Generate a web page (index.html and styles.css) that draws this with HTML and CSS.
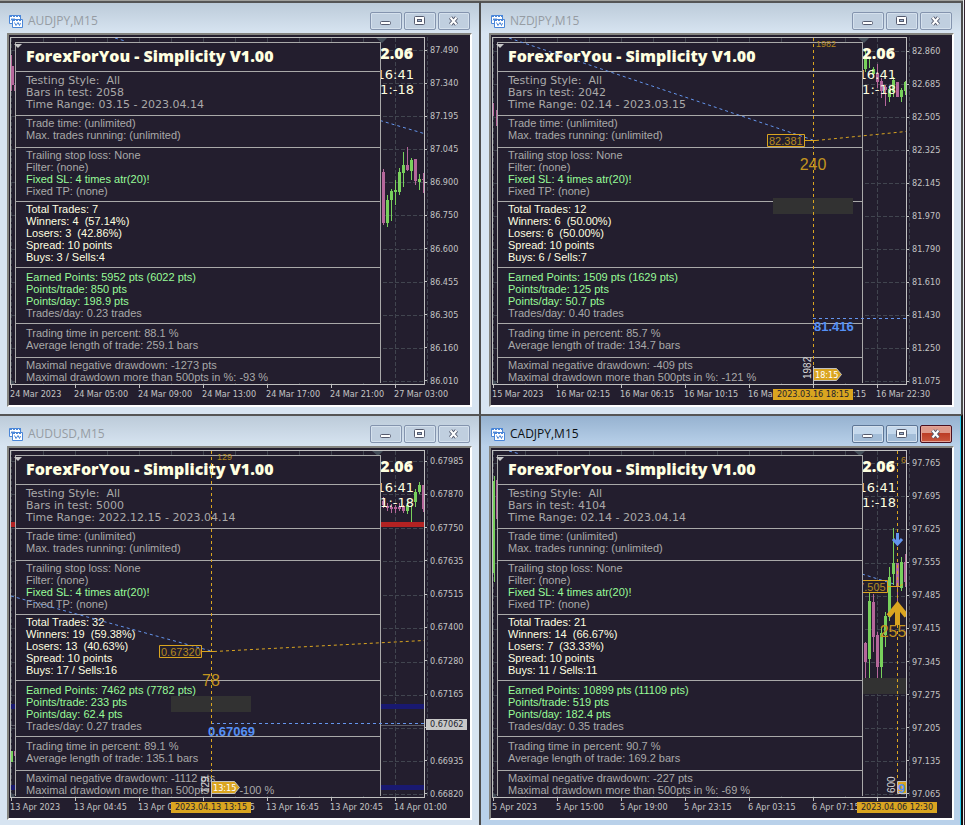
FILE: index.html
```html
<!DOCTYPE html>
<html lang="en">
<head>
<meta charset="utf-8">
<title>Charts</title>
<link rel="stylesheet" href="styles.css">
</head>
<body>
<svg class="defs" aria-hidden="true">
  <defs>
    <symbol id="i-chart" viewBox="0 0 15 15">
      <path d="M.5 1.5h11v8H.5z" fill="#fff" stroke="#4a86d8"/>
      <path d="M1 1.500h11M1 2.500h10" stroke="#4a86d8" stroke-dasharray="2 1"/>
      <path d="M2 6.500l1-2 1 2 1-2 1 1" fill="none" stroke="#4a86d8"/>
      <path d="M3.500 5.500h10v8h-10z" fill="#fff" stroke="#4a86d8"/>
      <path d="M4 6.500h10" stroke="#4a86d8" stroke-dasharray="2 1"/>
      <path d="M5.500 8.500l1.500 3 2-3 1.500 3 1-2.500" fill="none" stroke="#4a86d8"/>
    </symbol>
    <symbol id="i-min" viewBox="0 0 12 10">
      <rect x=".5" y="5.500" width="10" height="3" rx="1" fill="#fff" stroke="#555b6e"/>
    </symbol>
    <symbol id="i-max" viewBox="0 0 12 10">
      <rect x=".5" y=".5" width="10" height="8" rx="1" fill="#fff" stroke="#555b6e"/>
      <rect x="3.500" y="3.500" width="4" height="2" fill="#9fb4d0" stroke="#555b6e"/>
    </symbol>
    <symbol id="i-close" viewBox="0 0 12 10">
      <path d="M2.500 1.500l6 7M8.500 1.500l-6 7" stroke="#555b6e" stroke-width="4"/>
      <path d="M2.500 1.500l6 7M8.500 1.500l-6 7" stroke="#fff" stroke-width="2"/>
    </symbol>
    <path id="columns" d="M11.500 38V384M43.500 38V384M75.500 38V384M107.500 38V384M139.500 38V384M171.500 38V384M203.500 38V384M235.500 38V384M267.500 38V384M299.500 38V384M331.500 38V384M363.500 38V384M395.500 38V384"/>
    <g id="clock">
      <text class="version" x="413" y="59">2.06</text>
      <text class="time" x="414" y="79">16:41</text>
      <text class="time" x="414" y="94">1:-18</text>
    </g>
  </defs>
</svg>

<main class="desk">

<section class="window">
  <header class="bar">
    <svg class="app"><use href="#i-chart"/></svg>
    <h2>AUDJPY,M15</h2>
    <button type="button" aria-label="Minimize"><svg><use href="#i-min"/></svg></button>
    <button type="button" aria-label="Maximize"><svg><use href="#i-max"/></svg></button>
    <button type="button" aria-label="Close"><svg><use href="#i-close"/></svg></button>
  </header>
  <div class="frame">
    <div class="plot">
      <svg class="layer"><g transform="translate(-11 -38)">
        <use href="#columns" class="grid"/>
        <path class="grid" d="M11 50.500H424M11 83.500H424M11 116.500H424M11 149.500H424M11 182.500H424M11 215.500H424M11 249.500H424M11 282.500H424M11 315.500H424M11 348.500H424M11 381.500H424"/>
        <path class="slate" d="M376 38h11l-5 5zM11 379l4 5h-4z"/>
        <path class="blue" d="M115 38l10 3M380 120.500L424 133.500"/>
        <path class="bear" d="M11.500 55V91M14.500 85V91M383.500 169V225M407.500 147V171M415.500 159V185M423.500 173V193"/>
        <path class="bear body" d="M12.500 66V85M383.500 172V223M407.500 165V170M415.500 159V181M423.500 179V180"/>
        <path class="bull" d="M387.500 195V227M391.500 189V221M395.500 180V205M399.500 168V195M403.500 152V187M411.500 158V180M419.500 174V190"/>
        <path class="bull body" d="M387.500 200V223M391.500 191V200M395.500 190V192M399.500 172V192M403.500 165V173M411.500 160V171M419.500 179V182"/>
        <use href="#clock"/>
      </g></svg>
      <article class="stats">
        <h3>ForexForYou - Simplicity V1.00</h3>
        <div class="wide"><p>Testing Style:  All</p><p>Bars in test: 2058</p><p>Time Range: 03.15 - 2023.04.14</p></div>
        <div class="loose"><p>Trade time: (unlimited)</p><p>Max. trades running: (unlimited)</p></div>
        <div><p>Trailing stop loss: None</p><p>Filter: (none)</p><p class="good">Fixed SL: 4 times atr(20)!</p><p>Fixed TP: (none)</p></div>
        <div class="key"><p>Total Trades: 7</p><p>Winners: 4  (57.14%)</p><p>Losers: 3  (42.86%)</p><p>Spread: 10 points</p><p>Buys: 3 / Sells:4</p></div>
        <div class="low"><p class="good">Earned Points: 5952 pts (6022 pts)</p><p class="good">Points/trade: 850 pts</p><p class="good">Points/day: 198.9 pts</p><p>Trades/day: 0.23 trades</p></div>
        <div class="low loose"><p>Trading time in percent: 88.1 %</p><p>Average length of trade: 259.1 bars</p></div>
        <div class="last"><p>Maximal negative drawdown: -1273 pts</p><p>Maximal drawdown more than 500pts in %: -93 %</p></div>
      </article>
    </div>
    <ul class="prices"><li>87.490</li><li>87.340</li><li>87.195</li><li>87.045</li><li>86.900</li><li>86.750</li><li>86.600</li><li>86.455</li><li>86.305</li><li>86.160</li><li>86.010</li></ul>
    <ul class="times"><li>24 Mar 2023</li><li>24 Mar 05:00</li><li>24 Mar 09:00</li><li>24 Mar 13:00</li><li>24 Mar 17:00</li><li>24 Mar 21:00</li><li>27 Mar 03:00</li></ul>
  </div>
</section>

<section class="window nzd">
  <header class="bar">
    <svg class="app"><use href="#i-chart"/></svg>
    <h2>NZDJPY,M15</h2>
    <button type="button" aria-label="Minimize"><svg><use href="#i-min"/></svg></button>
    <button type="button" aria-label="Maximize"><svg><use href="#i-max"/></svg></button>
    <button type="button" aria-label="Close"><svg><use href="#i-close"/></svg></button>
  </header>
  <div class="frame">
    <div class="plot">
      <svg class="layer"><g transform="translate(-11 -38)">
        <use href="#columns" class="grid"/>
        <path class="grid" d="M11 51.500H424M11 84.500H424M11 117.500H424M11 150.500H424M11 183.500H424M11 216.500H424M11 249.500H424M11 282.500H424M11 315.500H424M11 348.500H424M11 381.500H424"/>
        <path class="slate" d="M376 38h11l-5 5zM11 379l4 5h-4z"/>
        <path class="bear" d="M11.500 103V116M14.500 110V126M395.500 64V88M399.500 78V98M403.500 85V106"/>
        <path class="bear body" d="M395.500 73V82M399.500 81V91M403.500 87V90M415.500 82V97"/>
        <path class="bull" d="M383.500 50V72M387.500 57V68M391.500 67V75M407.500 88V102M411.500 77V97M419.500 88V102M423.500 81V95"/>
        <path class="bull body" d="M383.500 58V69M391.500 69V74M407.500 89V97M411.500 80V92M419.500 90V97M423.500 82V91"/>
        <use href="#clock"/>
      </g></svg>
      <article class="stats">
        <h3>ForexForYou - Simplicity V1.00</h3>
        <div class="wide"><p>Testing Style:  All</p><p>Bars in test: 2042</p><p>Time Range: 02.14 - 2023.03.15</p></div>
        <div class="loose"><p>Trade time: (unlimited)</p><p>Max. trades running: (unlimited)</p></div>
        <div><p>Trailing stop loss: None</p><p>Filter: (none)</p><p class="good">Fixed SL: 4 times atr(20)!</p><p>Fixed TP: (none)</p></div>
        <div class="key"><p>Total Trades: 12</p><p>Winners: 6  (50.00%)</p><p>Losers: 6  (50.00%)</p><p>Spread: 10 points</p><p>Buys: 6 / Sells:7</p></div>
        <div class="low"><p class="good">Earned Points: 1509 pts (1629 pts)</p><p class="good">Points/trade: 125 pts</p><p class="good">Points/day: 50.7 pts</p><p>Trades/day: 0.40 trades</p></div>
        <div class="low loose"><p>Trading time in percent: 85.7 %</p><p>Average length of trade: 134.7 bars</p></div>
        <div class="last"><p>Maximal negative drawdown: -409 pts</p><p>Maximal drawdown more than 500pts in %: -121 %</p></div>
      </article>
      <svg class="layer"><g transform="translate(-11 -38)">
        <rect class="shade" x="291" y="198" width="80" height="16"/>
        <path class="blue" d="M27 38L331 140M331 318.500H424"/>
        <path class="gold dash" d="M331.500 38V366M334 140.500L424 131.500"/>
        <path class="gold" d="M322 140.500h12M285.500 134.500h37v12h-37z"/>
        <path class="rule" d="M331.500 366V384"/>
        <text class="bars" x="334" y="47">1982</text>
        <text class="level" x="287" y="145">82.381</text>
        <text class="count" x="331" y="170">240</text>
        <text class="target" x="332" y="331">81.416</text>
        <text class="side" transform="translate(329 379) rotate(-90)">1982</text>
        <path class="flag" d="M331.500 368.500h23l5 6-5 6h-23z"/>
        <text class="flagtext" x="333" y="378">18:15</text>
      </g></svg>
    </div>
    <ul class="prices"><li>82.860</li><li>82.685</li><li>82.505</li><li>82.325</li><li>82.145</li><li>81.970</li><li>81.790</li><li>81.610</li><li>81.430</li><li>81.250</li><li>81.075</li></ul>
    <ul class="times"><li>15 Mar 2023</li><li>16 Mar 02:15</li><li>16 Mar 06:15</li><li>16 Mar 10:15</li><li>16 Mar 14:15</li><li>16 Mar 18:15</li><li>16 Mar 22:30</li></ul>
    <time class="moment">2023.03.16 18:15</time>
  </div>
</section>

<section class="window usd">
  <header class="bar">
    <svg class="app"><use href="#i-chart"/></svg>
    <h2>AUDUSD,M15</h2>
    <button type="button" aria-label="Minimize"><svg><use href="#i-min"/></svg></button>
    <button type="button" aria-label="Maximize"><svg><use href="#i-max"/></svg></button>
    <button type="button" aria-label="Close"><svg><use href="#i-close"/></svg></button>
  </header>
  <div class="frame">
    <div class="plot">
      <svg class="layer"><g transform="translate(-11 -38)">
        <use href="#columns" class="grid"/>
        <path class="grid" d="M11 48.500H424M11 81.500H424M11 115.500H424M11 148.500H424M11 182.500H424M11 215.500H424M11 249.500H424M11 282.500H424M11 315.500H424M11 348.500H424M11 381.500H424"/>
        <path class="slate" d="M372 38h11l-5 5zM11 379l4 5h-4z"/>
        <rect x="11" y="109" width="413" height="5" fill="#b22222"/>
        <path d="M11 291h413v5H11zM11 372h413v5H11z" fill="#191970"/>
        <path d="M11 312.500H424" stroke="#5c5c66"/>
        <path class="bear" d="M14.500 338V343M383.500 84V95M387.500 90V98M391.500 91V100M395.500 92V100M399.500 90V98M403.500 92V100M423.500 72V99"/>
        <path class="bear body" d="M383.500 88V92M387.500 93V95M391.500 94V96M395.500 94V96M399.500 94V96M403.500 94V98M423.500 72V96"/>
        <path class="bull" d="M407.500 88V101M411.500 92V109M415.500 76V94M419.500 69V81"/>
        <path class="bull body" d="M11.500 338V349M407.500 92V98M415.500 79V89M419.500 72V79"/>
        <use href="#clock"/>
      </g></svg>
      <article class="stats">
        <h3>ForexForYou - Simplicity V1.00</h3>
        <div class="wide"><p>Testing Style:  All</p><p>Bars in test: 5000</p><p>Time Range: 2022.12.15 - 2023.04.14</p></div>
        <div class="loose"><p>Trade time: (unlimited)</p><p>Max. trades running: (unlimited)</p></div>
        <div><p>Trailing stop loss: None</p><p>Filter: (none)</p><p class="good">Fixed SL: 4 times atr(20)!</p><p>Fixed TP: (none)</p></div>
        <div class="key"><p>Total Trades: 32</p><p>Winners: 19  (59.38%)</p><p>Losers: 13  (40.63%)</p><p>Spread: 10 points</p><p>Buys: 17 / Sells:16</p></div>
        <div class="low"><p class="good">Earned Points: 7462 pts (7782 pts)</p><p class="good">Points/trade: 233 pts</p><p class="good">Points/day: 62.4 pts</p><p>Trades/day: 0.27 trades</p></div>
        <div class="low loose"><p>Trading time in percent: 89.1 %</p><p>Average length of trade: 135.1 bars</p></div>
        <div class="last"><p>Maximal negative drawdown: -1112 pts</p><p>Maximal drawdown more than 500pts in %: -100 %</p></div>
      </article>
      <svg class="layer"><g transform="translate(-11 -38)">
        <rect class="shade" x="171" y="283" width="80" height="16"/>
        <path class="blue" d="M11 183L211 238M211 310.500H424"/>
        <path class="gold dash" d="M211.500 38V366M214 238.500L424 227.500"/>
        <path class="gold" d="M202 238.500h12M159.500 232.500h42v12h-42z"/>
        <path class="rule" d="M211.500 366V384"/>
        <text class="bars" x="217" y="47">129</text>
        <text class="level" x="161" y="243">0.67320</text>
        <text class="count" x="211" y="273">78</text>
        <text class="target" x="208" y="323">0.67069</text>
        <text class="side" transform="translate(209 380) rotate(-90)">129</text>
        <path class="flag" d="M211.500 368.500h23l5 6-5 6h-23z"/>
        <text class="flagtext" x="213" y="378">13:15</text>
      </g></svg>
    </div>
    <ul class="prices"><li>0.67985</li><li>0.67870</li><li>0.67750</li><li>0.67635</li><li>0.67515</li><li>0.67400</li><li>0.67280</li><li>0.67165</li><li>0.67050<b class="quote">0.67062</b></li><li>0.66935</li><li>0.66820</li></ul>
    <ul class="times"><li>13 Apr 2023</li><li>13 Apr 04:45</li><li>13 Apr 08:45</li><li>13 Apr 12:45</li><li>13 Apr 16:45</li><li>13 Apr 20:45</li><li>14 Apr 01:00</li></ul>
    <time class="moment">2023.04.13 13:15</time>
  </div>
</section>

<section class="window cad active">
  <header class="bar">
    <svg class="app"><use href="#i-chart"/></svg>
    <h2>CADJPY,M15</h2>
    <button type="button" aria-label="Minimize"><svg><use href="#i-min"/></svg></button>
    <button type="button" aria-label="Maximize"><svg><use href="#i-max"/></svg></button>
    <button type="button" class="close" aria-label="Close"><svg><use href="#i-close"/></svg></button>
  </header>
  <div class="frame">
    <div class="plot">
      <svg class="layer"><g transform="translate(-11 -38)">
        <use href="#columns" class="grid"/>
        <path class="grid" d="M11 50.500H424M11 83.500H424M11 116.500H424M11 150.500H424M11 183.500H424M11 216.500H424M11 249.500H424M11 282.500H424M11 315.500H424M11 348.500H424M11 381.500H424"/>
        <path class="slate" d="M372 38h11l-5 5zM11 379l4 5h-4z"/>
        <path class="blue" d="M27 38l11 3M380 161L415 172"/>
        <path class="bull" d="M12.500 63V169M387.500 180V265M399.500 215V265M403.500 199V234M407.500 154V208M411.500 115V172M419.500 144V178"/>
        <path class="bull body" d="M11.500 68V160M387.500 188V246M399.500 220V254M403.500 203V222M407.500 164V204M411.500 150V161M419.500 149V175"/>
        <path class="bear" d="M14.500 67V106M383.500 229V265M391.500 181V239M395.500 219V265M415.500 150V190M423.500 141V174"/>
        <path class="bear body" d="M383.500 230V249M391.500 189V224M395.500 222V254M415.500 150V174M423.500 149V169"/>
        <rect class="shade" x="375" y="265" width="80" height="16"/>
        <path class="gold dash" d="M415.500 38V366M418 172.500L424 170.500"/>
        <path class="gold" d="M405 173.500h13M368.500 167.500h37v12h-37z"/>
        <path d="M415.500 120v10M411 126l4.500 5 4.500-5" fill="none" stroke="#6495ed" stroke-width="3"/>
        <path d="M415.500 212V192M406.500 203l9-11 9 11" fill="none" stroke="#daa520" stroke-width="5"/>
        <text class="bars" x="419" y="50">600</text>
        <text class="level" x="370" y="178">97.505</text>
        <text class="count" x="411" y="224">255</text>
        <text class="side" transform="translate(413 380) rotate(-90)">600</text>
        <path class="flag" d="M415.500 368.500h23l5 6-5 6h-23z"/>
        <text class="target" x="416" y="380">9</text>
        <use href="#clock"/>
      </g></svg>
      <article class="stats">
        <h3>ForexForYou - Simplicity V1.00</h3>
        <div class="wide"><p>Testing Style:  All</p><p>Bars in test: 4104</p><p>Time Range: 02.14 - 2023.04.14</p></div>
        <div class="loose"><p>Trade time: (unlimited)</p><p>Max. trades running: (unlimited)</p></div>
        <div><p>Trailing stop loss: None</p><p>Filter: (none)</p><p class="good">Fixed SL: 4 times atr(20)!</p><p>Fixed TP: (none)</p></div>
        <div class="key"><p>Total Trades: 21</p><p>Winners: 14  (66.67%)</p><p>Losers: 7  (33.33%)</p><p>Spread: 10 points</p><p>Buys: 11 / Sells:11</p></div>
        <div class="low"><p class="good">Earned Points: 10899 pts (11109 pts)</p><p class="good">Points/trade: 519 pts</p><p class="good">Points/day: 182.4 pts</p><p>Trades/day: 0.35 trades</p></div>
        <div class="low loose"><p>Trading time in percent: 90.7 %</p><p>Average length of trade: 169.2 bars</p></div>
        <div class="last"><p>Maximal negative drawdown: -227 pts</p><p>Maximal drawdown more than 500pts in %: -69 %</p></div>
      </article>
    </div>
    <ul class="prices"><li>97.765</li><li>97.695</li><li>97.625</li><li>97.555</li><li>97.485</li><li>97.415</li><li>97.345</li><li>97.275</li><li>97.205</li><li>97.135</li><li>97.065</li></ul>
    <ul class="times"><li>5 Apr 2023</li><li>5 Apr 15:00</li><li>5 Apr 19:00</li><li>5 Apr 23:15</li><li>6 Apr 03:15</li><li>6 Apr 07:15</li><li>6 Apr 11:15</li></ul>
    <time class="moment">2023.04.06 12:30</time>
  </div>
</section>

</main>
</body>
</html>
```
FILE: styles.css
```css
* { box-sizing: border-box; }
body {
  margin: 0;
  background: #e8edf0;
  border-right: 1px solid #33232f;
  font-family: "Liberation Sans", Arial, sans-serif;
}
h2, h3, p, ul { margin: 0; padding: 0; font-weight: normal; }
ul { list-style: none; }
.defs { position: absolute; width: 0; height: 0; }

.desk {
  display: grid;
  grid-template-columns: 1fr 1fr;
  margin: 0 1px 0 -1px;
  padding-top: 1px;
  background: #a0a09c;
}
.window {
  display: flex;
  flex-direction: column;
  min-width: 0;
  padding: 0 7px 7px 8px;
  border-top: 2px solid #555;
  border-right: 2px solid #4c4c4c;
  background: linear-gradient(#bccbd9, #d7e4f1 30px);
}
.usd, .cad { padding-bottom: 5px; }
.active {
  background: linear-gradient(#96b2d0, #b9d1ea 30px);
  box-shadow: inset -1px 0 #2bcdf0;
  border-right-color: #111;
}

.bar {
  display: flex;
  align-items: center;
  gap: 2px;
  height: 30px;
  padding: 6px 2px 0 2px;
}
.app { width: 15px; height: 15px; margin-right: 2px; }
.bar h2 {
  flex: 1;
  font: 12px/16px "Open Sans", "Noto Sans", sans-serif;
  color: #969ca3;
}
.active h2 { color: #0c1014; }
.bar button {
  display: flex;
  align-items: center;
  justify-content: center;
  width: 32px;
  height: 18px;
  padding: 0;
  border: 1px solid #8494ae;
  border-radius: 2px;
  box-shadow: inset 0 0 0 1px #d5e1ed;
  background: #c0cfdf;
}
.bar button svg { width: 12px; height: 10px; }
.active .bar button {
  border-color: #5d7696;
  background: linear-gradient(#c4d8ec 50%, #a3bdd8 50%);
}
.active .bar .close {
  border-color: #4a1020;
  box-shadow: inset 0 0 0 1px #e5a497;
  background: linear-gradient(#de9a8b 45%, #bb3c25 45%, #c9583f);
}

.frame {
  position: relative;
  display: grid;
  grid-template-columns: 1fr 45px;
  grid-template-rows: auto 20px;
  padding: 2px 0 0 1px;
  border: 2px solid;
  border-color: #84847f #fff #fff #84847f;
  background: #231e2e;
}
.plot {
  position: relative;
  overflow: hidden;
  min-width: 0;
  border: 1px solid #c0c0c0;
}
.layer { position: absolute; inset: 0; width: 100%; height: 100%; fill: none; }

.stats {
  position: relative;
  width: 366px;
  margin: 4px 0 1px 4px;
  border: solid #a9a9a9;
  border-width: 0 1px;
  background: #231e2e;
  color: #a9a9a9;
  font-size: 11px;
  line-height: 12px;
}
.stats p { white-space: pre; }
.stats::before {
  content: "";
  position: absolute;
  top: 2px;
  left: 0;
  border: solid transparent;
  border-width: 4px 4px 0;
  border-top-color: #c8c8c8;
  margin-left: -2px;
}
.stats h3 {
  height: 29px;
  padding: 0 10px;
  border-top: 1px solid #a9a9a9;
  font: 800 16px/26px "Open Sans", sans-serif;
  color: #ffffe0;
}
.stats div { padding: 1px 10px 4px; border-top: 1px solid #a9a9a9; }
.stats .wide { padding-top: 3px; font-family: "DejaVu Sans", Verdana, sans-serif; }
.stats .low { padding-top: 3px; }
.stats .loose { padding-bottom: 6px; }
.stats .last { padding-bottom: 0; }
.stats .key { color: #ffffe0; }
.stats .good { color: #98fb98; }

.prices, .times, .moment { font: 9px/12px "DejaVu Sans Condensed", "DejaVu Sans", sans-serif; font-stretch: condensed; color: #c4c4c4; }
.prices {
  display: flex;
  flex-direction: column;
  justify-content: space-between;
  margin-bottom: -2px;
  padding-top: 7px;
  background: repeating-linear-gradient(#41454f 0 4px, transparent 4px 6px) 2px 0 / 1px 348px no-repeat;
}
.nzd .prices { padding-top: 8px; }
.usd .prices { padding-top: 5px; }
.prices li { position: relative; display: flex; align-items: center; gap: 3px; }
.prices li::before { content: ""; width: 2px; height: 1px; background: #c0c0c0; }
.quote {
  position: absolute;
  left: 1px;
  top: -2px;
  padding: 0 4px;
  background: #c8c8c8;
  color: #231e2e;
  font-weight: normal;
  line-height: 11px;
}
.times { grid-column: 1 / -1; display: flex; white-space: nowrap; }
.times li { flex: 0 0 64px; }
.times li::before { content: ""; display: block; width: 1px; height: 3px; margin-left: 1px; background: #c0c0c0; }
.moment {
  position: absolute;
  bottom: 5px;
  width: 80px;
  height: 11px;
  line-height: 11px;
  background: #daa520;
  color: #231e2e;
  text-align: center;
  white-space: nowrap;
}
.nzd .moment { left: 282px; }
.usd .moment { left: 162px; }
.cad .moment { left: 366px; }

.grid { stroke: #41454f; stroke-dasharray: 4 2; }
.slate { fill: #454f5a; }
.bear { stroke: #b5679b; }
.bull { stroke: #78d05c; }
.body { stroke-width: 3; }
.blue { stroke: #6495ed; stroke-dasharray: 3 3; }
.gold { stroke: #daa520; }
.dash { stroke-dasharray: 3 3; }
.rule { stroke: #c0c0c0; }
.shade { fill: #323232; }
.flag { fill: #daa520; stroke: #c0c0c0; }
.version { font: 800 16px "Open Sans", sans-serif; fill: #ffffe0; text-anchor: end; }
.time { font: 13px "DejaVu Sans", Verdana, sans-serif; fill: #ffffe0; text-anchor: end; }
.bars { font-size: 9px; fill: #b58a20; }
.level { font-size: 11px; fill: #b58a20; }
.count { font-size: 16px; fill: #c4951f; text-anchor: middle; }
.target { font-size: 13px; font-weight: bold; fill: #5590f5; }
.side { font-size: 10px; fill: #d8d8d8; }
.flagtext { font: 9px "DejaVu Sans Condensed", "DejaVu Sans", sans-serif; font-stretch: condensed; fill: #fff; }
```
